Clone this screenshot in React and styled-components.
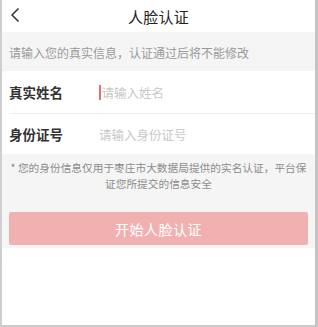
import React from "react";
import styled, { createGlobalStyle } from "styled-components";

const GlobalStyle = createGlobalStyle`
  html, body {
    margin: 0;
    padding: 0;
    background: #fff;
  }
  body {
    font-family: "Noto Sans CJK SC", "Noto Sans", sans-serif;
  }
`;

const Frame = styled.div`
  width: 318px;
  height: 327px;
  box-sizing: border-box;
  border-left: 2px solid #cfcfcf;
  border-right: 3px solid #c4c4c4;
  border-bottom: 2px solid #cacaca;
  background: #fff;
  overflow: hidden;
  display: flex;
  flex-direction: column;
`;

const Header = styled.div`
  height: 32px;
  display: flex;
  align-items: center;
  position: relative;
  justify-content: center;
  background: #fff;
`;

const BackButton = styled.div`
  position: absolute;
  left: 6px;
  top: 7px;
  width: 14px;
  height: 16px;
  display: flex;
`;

const Title = styled.div`
  font-size: 15px;
  color: #222;
  letter-spacing: 0.3px;
`;

const Notice = styled.div`
  background: #f5f5f5;
  height: 39px;
  display: flex;
  align-items: center;
  padding-left: 7px;
  padding-top: 2px;
  box-sizing: border-box;
  font-size: 12px;
  color: #9a9a9a;
`;

const Form = styled.div`
  background: #fff;
  display: flex;
  flex-direction: column;
`;

const Row = styled.div`
  height: ${(p) => p.$h}px;
  margin-left: 7px;
  display: flex;
  align-items: center;
  border-bottom: ${(p) => (p.$divider ? "1px solid #eeeeee" : "none")};
`;

const Label = styled.div`
  width: 90px;
  font-size: 13.5px;
  font-weight: 600;
  color: #333;
`;

const Input = styled.div`
  display: flex;
  align-items: center;
  font-size: 12.5px;
  color: #c8c8c8;
`;

const Caret = styled.span`
  width: 1.5px;
  height: 15px;
  background: #e07070;
  margin-right: 1px;
`;

const Bottom = styled.div`
  background: #f5f5f5;
  padding: 6px 7px 3px 7px;
  display: flex;
  flex-direction: column;
`;

const Tip = styled.div`
  font-size: 10.7px;
  line-height: 16px;
  color: #8c8c8c;
  text-align: center;
`;

const Button = styled.button`
  margin-top: 20px;
  height: 33px;
  border: none;
  border-radius: 2px;
  background: #f2b1b1;
  color: #fff;
  font-family: inherit;
  font-size: 14px;
  letter-spacing: 0.5px;
  padding: 0;
`;

export default function App() {
  return (
    <>
      <GlobalStyle />
      <Frame>
        <Header>
          <BackButton>
            <svg width="14" height="16" viewBox="0 0 14 16">
              <path
                d="M10.5 1.5 L4 8 L10.5 14.5"
                fill="none"
                stroke="#333"
                strokeWidth="1.5"
              />
            </svg>
          </BackButton>
          <Title>人脸认证</Title>
        </Header>
        <Notice>请输入您的真实信息，认证通过后将不能修改</Notice>
        <Form>
          <Row $h={42} $divider>
            <Label>真实姓名</Label>
            <Input>
              <Caret />
              请输入姓名
            </Input>
          </Row>
          <Row $h={40}>
            <Label>身份证号</Label>
            <Input>请输入身份证号</Input>
          </Row>
        </Form>
        <Bottom>
          <Tip>
            * 您的身份信息仅用于枣庄市大数据局提供的实名认证，平台保证您所提交的信息安全
          </Tip>
          <Button>开始人脸认证</Button>
        </Bottom>
      </Frame>
    </>
  );
}
